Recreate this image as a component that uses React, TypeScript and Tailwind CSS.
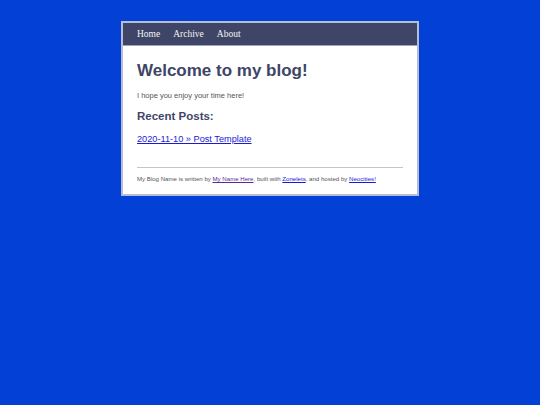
export default function App() {
  return (
    <div className="min-h-screen bg-[#0341d6] pt-[21px] font-['Liberation_Sans',Arial,sans-serif]">
      <div className="mx-auto w-[298px] border-2 border-[#b7bdd6] bg-white">
        <nav className="flex h-[23px] items-center gap-[13px] border-b border-[#9ea5c4] bg-[#3e4566] px-[14px] font-['Liberation_Serif','Times_New_Roman',serif] text-[9.5px] text-[#f4f4f4]">
          <a href="#">Home</a>
          <a href="#">Archive</a>
          <a href="#">About</a>
        </nav>
        <main className="px-[14px] pt-[15px] pb-[11px]">
          <h1 className="text-[17px] leading-[20px] font-bold text-[#3e4566]">Welcome to my blog!</h1>
          <p className="mt-[10px] text-[7.5px] leading-[10px] text-[#555]">I hope you enjoy your time here!</p>
          <h2 className="mt-[8px] text-[11.5px] leading-[14px] font-bold text-[#3e4566]">Recent Posts:</h2>
          <ul className="mt-[10px]">
            <li className="text-[9.2px] leading-[12px]">
              <a href="#" className="text-[#1a1ad6] underline">2020-11-10 » Post Template</a>
            </li>
          </ul>
          <hr className="mt-[22px] border-t border-[#c4c4c4]" />
          <footer className="mt-[7px] text-[6.1px] leading-[8px] text-[#555]">
            My Blog Name is written by{' '}
            <a href="#" className="text-[#5a2a9a] underline">My Name Here</a>, built with{' '}
            <a href="#" className="text-[#1a1ad6] underline">Zonelets</a>, and hosted by{' '}
            <a href="#" className="text-[#1a1ad6] underline">Neocities!</a>
          </footer>
        </main>
      </div>
    </div>
  );
}
